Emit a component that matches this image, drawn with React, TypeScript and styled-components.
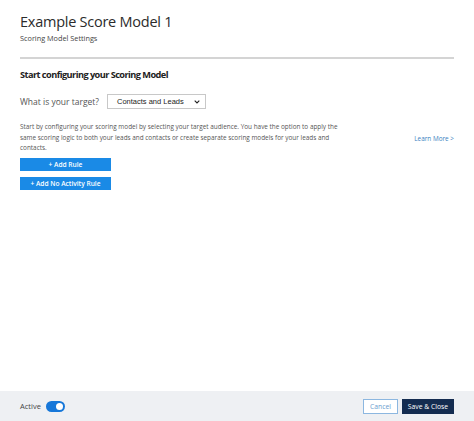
import React, { useState } from "react";
import styled, { createGlobalStyle } from "styled-components";

const GlobalStyle = createGlobalStyle`
  html, body {
    margin: 0;
    padding: 0;
    background: #ffffff;
    font-family: "Open Sans", "Noto Sans", Arial, sans-serif;
    color: #333;
  }
`;

const Page = styled.div`
  display: flex;
  flex-direction: column;
  min-height: 100vh;
`;

const Main = styled.main`
  flex: 1;
  padding: 12px 20px 0 20px;
`;

const Title = styled.h1`
  margin: 0;
  font-size: 14.5px;
  letter-spacing: -0.25px;
  font-weight: 400;
  line-height: 20px;
  color: #2b2b2b;
`;

const Subtitle = styled.div`
  margin-top: 1px;
  font-size: 7.3px;
  line-height: 10px;
  color: #444;
`;

const Divider = styled.hr`
  margin: 14px 0 0 0;
  border: none;
  height: 2px;
  background: #d4d4d4;
`;

const SectionTitle = styled.h2`
  margin: 9px 0 0 0;
  font-size: 9.2px;
  letter-spacing: -0.55px;
  font-weight: 700;
  line-height: 14px;
  color: #222;
`;

const TargetRow = styled.div`
  display: flex;
  align-items: center;
  gap: 8px;
  margin-top: 12px;
  font-size: 8.5px;
  color: #555;
`;

const SelectBox = styled.div`
  width: 99px;
  height: 15px;
  box-sizing: border-box;
  border: 1px solid #c8c8c8;
  display: flex;
  align-items: center;
  justify-content: space-between;
  padding: 0 5px 0 9px;
  font-family: "Liberation Sans", Arial, sans-serif;
  font-size: 7.5px;
  color: #222;
`;

const InfoRow = styled.div`
  display: flex;
  align-items: center;
  justify-content: space-between;
  margin-top: 13px;
`;

const Description = styled.p`
  margin: 0;
  width: 332px;
  font-size: 6.4px;
  line-height: 10.5px;
  color: #555;
`;

const LearnMore = styled.a`
  font-size: 6.4px;
  color: #3a7fc1;
  text-decoration: none;
  margin-top: 1px;
`;

const RuleButtons = styled.div`
  display: flex;
  flex-direction: column;
  gap: 6px;
  margin-top: 4px;
`;

const RuleButton = styled.button`
  width: 91px;
  height: 13px;
  border: none;
  background: #1a8ae6;
  color: #fff;
  font-family: "Open Sans", Arial, sans-serif;
  font-size: 6.6px;
  font-weight: 600;
  padding: 0;
  cursor: pointer;
`;

const Footer = styled.footer`
  height: 30px;
  background: #eef0f3;
  display: flex;
  align-items: center;
  justify-content: space-between;
  padding: 0 20px;
`;

const ActiveGroup = styled.div`
  display: flex;
  align-items: center;
  gap: 5px;
  font-size: 7.5px;
  color: #444;
`;

const Track = styled.button<{ $on: boolean }>`
  width: 19px;
  height: 11px;
  border-radius: 6px;
  border: none;
  padding: 0;
  background: ${(p) => (p.$on ? "#1677d9" : "#b9bec6")};
  position: relative;
  cursor: pointer;
`;

const Knob = styled.span<{ $on: boolean }>`
  position: absolute;
  top: 2px;
  left: ${(p) => (p.$on ? "10px" : "2px")};
  width: 7px;
  height: 7px;
  border-radius: 50%;
  background: #fff;
`;

const Actions = styled.div`
  display: flex;
  gap: 4px;
`;

const FooterButton = styled.button<{ $primary?: boolean }>`
  height: 15px;
  width: ${(p) => (p.$primary ? "52px" : "35px")};
  padding: 0;
  font-family: "Open Sans", Arial, sans-serif;
  font-size: 6.8px;
  cursor: pointer;
  border: 1px solid ${(p) => (p.$primary ? "#142c50" : "#8cb7e0")};
  background: ${(p) => (p.$primary ? "#142c50" : "#ffffff")};
  color: ${(p) => (p.$primary ? "#ffffff" : "#6a9dcf")};
`;

const Chevron = () => (
  <svg width="6" height="4" viewBox="0 0 6 4">
    <path d="M0.7 0.7 L3 3 L5.3 0.7" fill="none" stroke="#222" strokeWidth="1.1" />
  </svg>
);

export default function App() {
  const [active, setActive] = useState(true);
  return (
    <Page>
      <GlobalStyle />
      <Main>
        <Title>Example Score Model 1</Title>
        <Subtitle>Scoring Model Settings</Subtitle>
        <Divider />
        <SectionTitle>Start configuring your Scoring Model</SectionTitle>
        <TargetRow>
          <span>What is your target?</span>
          <SelectBox>
            <span>Contacts and Leads</span>
            <Chevron />
          </SelectBox>
        </TargetRow>
        <InfoRow>
          <Description>
            Start by configuring your scoring model by selecting your target audience. You have the
            option to apply the same scoring logic to both your leads and contacts or create separate
            scoring models for your leads and contacts.
          </Description>
          <LearnMore href="#">Learn More &gt;</LearnMore>
        </InfoRow>
        <RuleButtons>
          <RuleButton>+ Add Rule</RuleButton>
          <RuleButton>+ Add No Activity Rule</RuleButton>
        </RuleButtons>
      </Main>
      <Footer>
        <ActiveGroup>
          <span>Active</span>
          <Track $on={active} onClick={() => setActive(!active)}>
            <Knob $on={active} />
          </Track>
        </ActiveGroup>
        <Actions>
          <FooterButton>Cancel</FooterButton>
          <FooterButton $primary>Save &amp; Close</FooterButton>
        </Actions>
      </Footer>
    </Page>
  );
}
